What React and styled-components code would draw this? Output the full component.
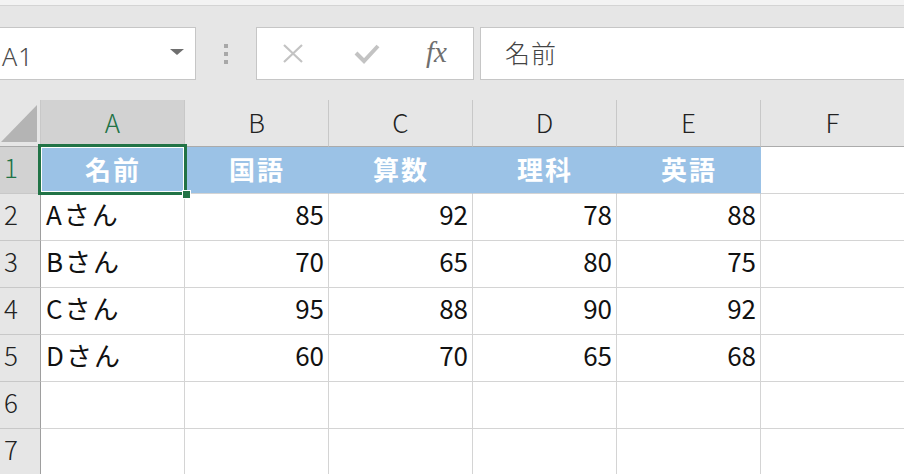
import styled, { createGlobalStyle } from 'styled-components';

const GlobalStyle = createGlobalStyle`
  html, body {
    margin: 0;
    padding: 0;
    background: #ffffff;
    overflow: hidden;
  }
  body {
    font-family: "Noto Sans CJK JP", "Noto Sans", sans-serif;
  }
`;

const Page = styled.div`
  width: 904px;
  height: 474px;
  overflow: hidden;
  background: #ffffff;
`;

const TopStrip = styled.div`
  height: 5px;
  background: #f3f3f3;
  border-bottom: 1px solid #d4d4d4;
`;

const FormulaBar = styled.div`
  display: flex;
  align-items: center;
  height: 94px;
  background: #e6e6e6;
  padding-top: 1px;
  box-sizing: border-box;
`;

const NameBox = styled.div`
  position: relative;
  width: 198px;
  height: 53px;
  margin-left: -2px;
  box-sizing: border-box;
  background: #fff;
  border: 1px solid #c6c6c6;
  display: flex;
  align-items: center;
  padding-left: 3px;
  padding-top: 4px;
  font-family: "Noto Sans", "Liberation Sans", sans-serif;
  font-size: 25px;
  font-weight: 300;
  color: #4a4a4a;
  letter-spacing: 1px;
`;

const DropArrow = styled.span`
  position: absolute;
  right: 11px;
  top: 21px;
  width: 0;
  height: 0;
  border-left: 7px solid transparent;
  border-right: 7px solid transparent;
  border-top: 6px solid #6f6f6f;
`;

const Grip = styled.div`
  width: 60px;
  display: flex;
  flex-direction: column;
  align-items: center;
  gap: 4px;
  span {
    width: 4px;
    height: 4px;
    background: #a8a8a8;
  }
`;

const FxBox = styled.div`
  width: 218px;
  height: 53px;
  box-sizing: border-box;
  background: #fff;
  border: 1px solid #c6c6c6;
  display: flex;
  align-items: center;
  padding-left: 25px;
`;

const FxButton = styled.div`
  width: ${(p) => p.$w}px;
  display: flex;
  align-items: center;
  justify-content: flex-start;
`;

const FxLabel = styled.span`
  font-family: "Liberation Serif", "DejaVu Serif", serif;
  font-style: italic;
  font-size: 29px;
  color: #6f6f6f;
  line-height: 1;
  margin-top: -2px;
`;

const FormulaInput = styled.div`
  flex: 1;
  height: 53px;
  margin-left: 6px;
  margin-right: -2px;
  box-sizing: border-box;
  background: #fff;
  border: 1px solid #c6c6c6;
  display: flex;
  align-items: center;
  padding-left: 24px;
  padding-bottom: 3px;
  font-size: 25px;
  font-weight: 300;
  color: #444;
  letter-spacing: 1px;
`;

const Sheet = styled.div`
  display: grid;
  grid-template-columns: 41px repeat(6, 144px);
  grid-auto-rows: 47px;
`;

const Corner = styled.div`
  position: relative;
  background: #e6e6e6;
  border-right: 1px solid #c8c8c8;
  border-bottom: 1px solid #ababab;
  svg {
    position: absolute;
    left: 0;
    top: 3px;
  }
`;

const ColHead = styled.div`
  display: flex;
  align-items: center;
  justify-content: center;
  background: ${(p) => (p.$active ? '#d2d2d2' : '#e6e6e6')};
  color: ${(p) => (p.$active ? '#217346' : '#222')};
  border-right: 1px solid #c8c8c8;
  border-bottom: 1px solid #ababab;
  font-size: 26px;
  font-weight: 300;
  padding-bottom: 4px;
  box-sizing: border-box;
`;

const RowHead = styled.div`
  display: flex;
  align-items: center;
  padding: 0 0 7px 4px;
  background: ${(p) => (p.$active ? '#d2d2d2' : '#e6e6e6')};
  color: ${(p) => (p.$active ? '#217346' : '#222')};
  border-right: 1px solid #9e9e9e;
  border-bottom: 1px solid #c8c8c8;
  font-size: 26px;
  font-weight: 300;
  box-sizing: border-box;
`;

const Cell = styled.div`
  position: relative;
  display: flex;
  align-items: center;
  justify-content: ${(p) => (p.$title ? 'center' : p.$num ? 'flex-end' : 'flex-start')};
  padding: 0 4px ${(p) => (p.$title ? 4 : 8)}px 5px;
  box-sizing: border-box;
  background: ${(p) => (p.$title ? '#9bc2e6' : '#fff')};
  color: ${(p) => (p.$title ? '#fff' : '#111')};
  font-weight: ${(p) => (p.$title ? 700 : 400)};
  letter-spacing: ${(p) => (p.$num ? 0 : 2)}px;
  border-right: 1px solid ${(p) => (p.$title ? '#9bc2e6' : '#d4d4d4')};
  border-bottom: 1px solid #d4d4d4;
  font-size: 26px;
  white-space: nowrap;
`;

const Selection = styled.div`
  position: absolute;
  z-index: 5;
  left: -3px;
  top: -3px;
  width: 149px;
  height: 51px;
  box-sizing: border-box;
  border: 3px solid #217346;
  box-shadow: inset 0 0 0 1px #ffffff;
  pointer-events: none;
`;

const FillHandle = styled.div`
  position: absolute;
  right: -7px;
  bottom: -7px;
  width: 7px;
  height: 7px;
  background: #217346;
  border: 1px solid #ffffff;
`;

const columns = ['A', 'B', 'C', 'D', 'E', 'F'];

const rows = [
  ['名前', '国語', '算数', '理科', '英語', ''],
  ['Aさん', '85', '92', '78', '88', ''],
  ['Bさん', '70', '65', '80', '75', ''],
  ['Cさん', '95', '88', '90', '92', ''],
  ['Dさん', '60', '70', '65', '68', ''],
  ['', '', '', '', '', ''],
  ['', '', '', '', '', ''],
];

export default function App() {
  return (
    <Page>
      <GlobalStyle />
      <TopStrip />
      <FormulaBar>
        <NameBox>
          A1
          <DropArrow />
        </NameBox>
        <Grip>
          <span />
          <span />
          <span />
        </Grip>
        <FxBox>
          <FxButton $w={72}>
            <svg width="22" height="21" viewBox="0 0 22 21">
              <path d="M2 2 L20 19 M20 2 L2 19" stroke="#c3c3c3" strokeWidth="2.2" fill="none" />
            </svg>
          </FxButton>
          <FxButton $w={72}>
            <svg width="26" height="21" viewBox="0 0 26 21">
              <path d="M2 10 L10 18 L24 3" stroke="#c3c3c3" strokeWidth="4" fill="none" />
            </svg>
          </FxButton>
          <FxButton $w={40}>
            <FxLabel>fx</FxLabel>
          </FxButton>
        </FxBox>
        <FormulaInput>名前</FormulaInput>
      </FormulaBar>
      <Sheet>
        <Corner>
          <svg width="38" height="40" viewBox="0 0 38 40">
            <polygon points="37,2 37,39 1,39" fill="#b4b4b4" />
          </svg>
        </Corner>
        {columns.map((c) => (
          <ColHead key={c} $active={c === 'A'}>
            {c}
          </ColHead>
        ))}
        {rows.map((row, r) => [
          <RowHead key={`h${r}`} $active={r === 0}>
            {r + 1}
          </RowHead>,
          ...row.map((v, c) => {
            const title = r === 0 && c < 5;
            const num = r > 0 && c > 0;
            return (
              <Cell key={`${r}-${c}`} $title={title} $num={num}>
                {v}
                {r === 0 && c === 0 && (
                  <Selection>
                    <FillHandle />
                  </Selection>
                )}
              </Cell>
            );
          }),
        ])}
      </Sheet>
    </Page>
  );
}
